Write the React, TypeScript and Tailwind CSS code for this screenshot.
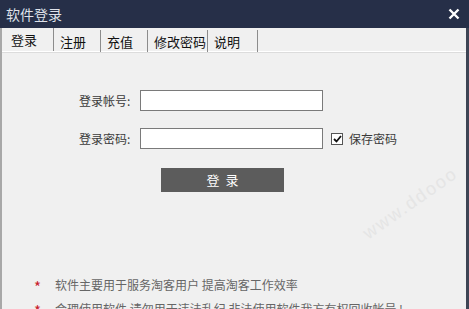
import React from "react";

const font = { fontFamily: '"Noto Sans CJK SC", "Noto Sans", sans-serif' };

export default function App() {
  const tabs = ["登录", "注册", "充值", "修改密码", "说明"];
  const widths = ["w-[52px]", "w-[47px]", "w-[47px]", "w-[60px]", "w-[50px]"];
  return (
    <div className="w-[469px] h-[309px] overflow-hidden bg-[#f0f0f0] flex flex-col relative" style={font}>
      <div className="h-[28px] bg-[#262f48] flex items-center justify-between pl-[6px] pr-[9px] shrink-0">
        <span className="text-[14px] text-[#dfe2ea] leading-none">软件登录</span>
        <svg width="12" height="12" viewBox="0 0 12 12">
          <path d="M1.5 1.5 L10.5 10.5 M10.5 1.5 L1.5 10.5" stroke="#ffffff" strokeWidth="2.4" />
        </svg>
      </div>
      <div className="flex-1 flex border-l-2 border-l-[#a8a8a8] border-r-[3px] border-r-[#3d4454] relative">
        <div className="flex-1 flex flex-col">
          <div className="h-[24px] flex border-b border-b-[#ffffff] shrink-0">
            {tabs.map((t, i) => (
              <div
                key={t}
                className={`${widths[i]} h-full flex items-end ${i === 0 ? "pl-[9px] pb-[5px]" : "pl-[6px] pb-[5px] mt-[2px]"} border-r border-r-[#8c8c8c] text-[13px] text-[#111] leading-none`}
              >
                {t}
              </div>
            ))}
          </div>
          <div className="border-t border-t-[#dcdcdc]" />
          <div className="flex flex-col pl-[77px] pt-[37px] text-[12px] text-[#3a3a3a]">
            <div className="flex items-center h-[21px]">
              <span className="w-[61px]">登录帐号:</span>
              <div className="w-[183px] h-[21px] bg-white border border-[#7a7a7a]" />
            </div>
            <div className="flex items-center h-[21px] mt-[17px]">
              <span className="w-[61px]">登录密码:</span>
              <div className="w-[183px] h-[21px] bg-white border border-[#7a7a7a]" />
              <div className="ml-[8px] w-[12px] h-[12px] bg-white border border-[#555] flex items-center justify-center">
                <svg width="9" height="8" viewBox="0 0 9 8">
                  <path d="M1 4 L3.5 6.5 L8 1" stroke="#111" strokeWidth="1.8" fill="none" />
                </svg>
              </div>
              <span className="ml-[6px]">保存密码</span>
            </div>
            <div className="ml-[82px] mt-[19px] w-[123px] h-[24px] bg-[#5c5c5c] text-white text-[13px] flex items-center justify-center tracking-[6px] pl-[6px]">
              登录
            </div>
          </div>
          <div className="mt-auto pl-[32px] text-[12px] text-[#666] flex flex-col gap-[10px] translate-y-[7px]">
            <div className="flex items-center h-[14px]">
              <span className="text-[#c8202c] w-[21px] text-[15px] leading-none pt-[3px]">*</span>
              <span>软件主要用于服务淘客用户 提高淘客工作效率</span>
            </div>
            <div className="flex items-center h-[14px]">
              <span className="text-[#c8202c] w-[21px] text-[15px] leading-none pt-[3px]">*</span>
              <span>合理使用软件 请勿用于违法乱纪 非法使用软件我方有权回收帐号 !</span>
            </div>
          </div>
        </div>
      </div>
      <div className="absolute inset-0 pointer-events-none text-[#dedede] opacity-60 text-[18px]" style={{ fontFamily: '"Liberation Sans", sans-serif' }}>
        <span className="absolute left-[355px] top-[190px] -rotate-[35deg] tracking-[2px]">www.ddooo</span>
      </div>
    </div>
  );
}
